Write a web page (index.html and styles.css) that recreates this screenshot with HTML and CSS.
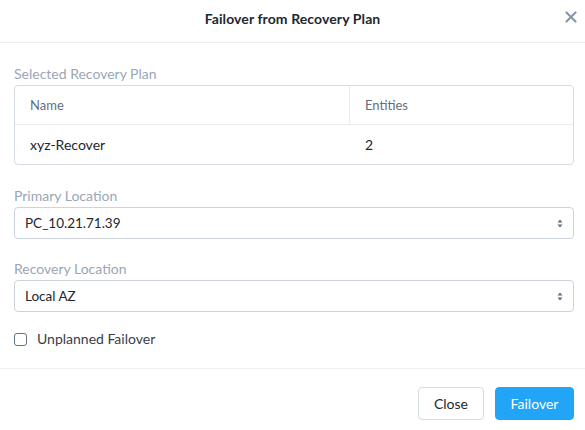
FILE: index.html
```html
<!DOCTYPE html>
<html>
<head>
<meta charset="utf-8">
<link rel="stylesheet" href="styles.css">
</head>
<body>
<div class="modal">
  <div class="modal-header">
    <div class="title">Failover from Recovery Plan</div>
    <button class="close-x" aria-label="Close">
      <svg width="12" height="12" viewBox="0 0 12 12"><path d="M1.5 1.5 L10.5 10.5 M10.5 1.5 L1.5 10.5" stroke="#8a97a8" stroke-width="2.2" stroke-linecap="round"/></svg>
    </button>
  </div>
  <div class="modal-body">
    <div class="field f-plan">
      <div class="label">Selected Recovery Plan</div>
      <div class="table">
        <div class="row head">
          <div class="cell c1">Name</div>
          <div class="cell c2">Entities</div>
        </div>
        <div class="row">
          <div class="cell c1">xyz-Recover</div>
          <div class="cell c2">2</div>
        </div>
      </div>
    </div>
    <div class="field f-primary">
      <div class="label">Primary Location</div>
      <div class="select"><span>PC_10.21.71.39</span>
        <svg width="6" height="9" viewBox="0 0 6 9"><path d="M3 0.5 L5.5 3.5 H0.5 Z M3 8.5 L5.5 5.5 H0.5 Z" fill="#5f6f82"/></svg>
      </div>
    </div>
    <div class="field f-recovery">
      <div class="label">Recovery Location</div>
      <div class="select"><span>Local AZ</span>
        <svg width="6" height="9" viewBox="0 0 6 9"><path d="M3 0.5 L5.5 3.5 H0.5 Z M3 8.5 L5.5 5.5 H0.5 Z" fill="#5f6f82"/></svg>
      </div>
    </div>
    <label class="check"><span class="box"></span><span>Unplanned Failover</span></label>
  </div>
  <div class="modal-footer">
    <button class="btn btn-default">Close</button>
    <button class="btn btn-primary">Failover</button>
  </div>
</div>
</body>
</html>
```
FILE: styles.css
```css
* { box-sizing: border-box; }
html, body { margin: 0; padding: 0; background: #fff; }
body { font-family: Lato, "Open Sans", sans-serif; color: #22272e; }
.modal { width: 585px; height: 430px; display: flex; flex-direction: column; }
.modal-header {
  height: 43px; border-bottom: 1px solid #eceff3;
  display: flex; align-items: center; justify-content: center; position: relative;
}
.title { font-size: 14px; font-weight: 700; color: #22272e; letter-spacing: 0.1px; padding-bottom: 6px; }
.close-x { position: absolute; right: 8px; top: 11px; border: 0; background: none; padding: 0; width: 12px; height: 12px; display: flex; }
.modal-body { padding: 22px 11px 0 14px; flex: 1; display: flex; flex-direction: column; }
.f-plan { margin-bottom: 22px; }
.f-primary { margin-bottom: 21px; }
.f-recovery { margin-bottom: 18px; }
.label { font-size: 14px; color: #9aa6b6; line-height: 18px; margin-bottom: 2px; }
.table { border: 1px solid #d6dce4; border-radius: 4px; }
.row { display: flex; height: 39px; }
.row.head { height: 39px; border-bottom: 1px solid #e9ecf0; }
.cell { display: flex; align-items: center; padding-left: 15px; font-size: 14px; }
.c1 { width: 335px; }
.c2 { flex: 1; }
.head .cell { font-size: 13px; color: #5f6f82; }
.head .c1 { border-right: 1px solid #e9ecf0; }
.select {
  height: 32px; border: 1px solid #cdd3dc; border-radius: 4px;
  display: flex; align-items: center; justify-content: space-between;
  padding: 0 10px 0 10px; font-size: 13.5px; color: #22272e;
}
.check { display: flex; align-items: center; gap: 10px; font-size: 14px; line-height: 18px; color: #36404c; }
.box { width: 13px; height: 13px; border: 1.5px solid #627386; border-radius: 3px; }
.modal-footer {
  height: 62px; border-top: 1px solid #eef0f4;
  display: flex; justify-content: flex-end; align-items: flex-start; gap: 11px;
  padding: 18px 11px 0 0;
}
.btn { height: 33px; border-radius: 4px; font-family: inherit; font-size: 14px; padding: 0 10px; cursor: pointer; }
.btn-default { background: #fff; border: 1px solid #d6dce4; color: #22272e; width: 66px; }
.btn-primary { background: #22a5f7; border: 1px solid #22a5f7; color: #fff; width: 79px; }
```
